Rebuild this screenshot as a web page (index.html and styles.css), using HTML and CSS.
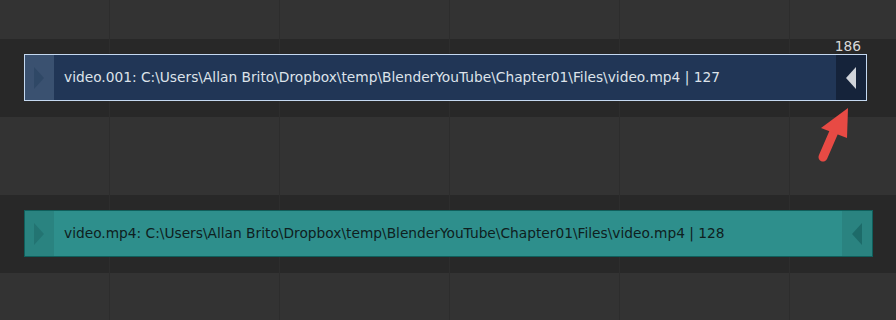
FILE: index.html
```html
<!DOCTYPE html>
<html lang="en">
<head>
    <meta charset="UTF-8">
    <title>Sequencer strips</title>
    <link rel="stylesheet" href="styles.css">
</head>
<body>
    <div class="timeline">
        <div class="band light top"></div>

        <!-- Channel 2 -->
        <div class="band dark">
            <div class="strip selected">
                <span class="frame-label">186</span>
                <div class="handle left"><span class="tri right-tri"></span></div>
                <div class="strip-name">video.001: C:\Users\Allan Brito\Dropbox\temp\BlenderYouTube\Chapter01\Files\video.mp4 | 127</div>
                <div class="handle right"><span class="tri left-tri"></span></div>
            </div>
        </div>

        <div class="band light"></div>

        <!-- Channel 1 -->
        <div class="band dark">
            <div class="strip movie">
                <div class="handle left"><span class="tri right-tri"></span></div>
                <div class="strip-name">video.mp4: C:\Users\Allan Brito\Dropbox\temp\BlenderYouTube\Chapter01\Files\video.mp4 | 128</div>
                <div class="handle right"><span class="tri left-tri"></span></div>
            </div>
        </div>

        <div class="band light bottom"></div>

        <!-- annotation arrow -->
        <svg class="pointer" width="60" height="70" viewBox="0 0 60 70">
            <line x1="9" y1="57" x2="22" y2="27" stroke="#e84a44" stroke-width="9" stroke-linecap="round"/>
            <polygon points="34,8 7,28 33,38" fill="#e84a44"/>
        </svg>
    </div>
</body>
</html>
```

FILE: styles.css
```css
/* Video sequencer timeline */
body {
    margin: 0;
    padding: 0;
    background: #333333;
    font-family: "DejaVu Sans", "Liberation Sans", sans-serif;
}

.timeline {
    position: relative;
    width: 896px;
    height: 320px;
    overflow: hidden;
    display: flex;
    flex-direction: column;
}

/* Channel bands with frame grid lines */
.band {
    background-image: linear-gradient(to right, transparent 109px, #2d2d2d 109px, #2d2d2d 110px, transparent 110px);
    background-size: 170px 100%;
    box-sizing: border-box;
}

.band.light {
    background-color: #333333;
    height: 78px;
}

.band.top {
    height: 39px;
}

.band.bottom {
    flex: 1;
}

.band.dark {
    background-color: #282828;
    height: 78px;
    padding: 15px 0 0 24px;
}

/* Strips */
.strip {
    position: relative;
    display: flex;
    align-items: stretch;
    height: 47px;
    box-sizing: border-box;
    border: 1px solid;
}

.strip.selected {
    width: 843px;
    background: #213656;
    border-color: #c5d9f1;
    color: #dde3ea;
}

.strip.movie {
    width: 849px;
    background: #2e8f8c;
    border-color: #0f5f5c;
    color: #0e2020;
}

.strip-name {
    flex: 1;
    padding-left: 10px;
    font-size: 13.75px;
    line-height: 45px;
    white-space: nowrap;
    overflow: hidden;
}

.handle {
    width: 29px;
    display: flex;
    align-items: center;
}

.selected .handle.left {
    background: #3a5170;
}

.selected .handle.right {
    width: 30px;
    background: #15233a;
}

.movie .handle.left {
    background: #2a8380;
}

.movie .handle.right {
    width: 30px;
    background: #2a8380;
}

.tri {
    width: 0;
    height: 0;
    border-top: 11px solid transparent;
    border-bottom: 11px solid transparent;
}

.right-tri {
    margin-left: 9px;
    border-left: 10px solid #2f4866;
}

.movie .right-tri {
    border-left-color: #237472;
}

.left-tri {
    margin-left: 10px;
    border-right: 10px solid #d0d4da;
}

.movie .left-tri {
    border-right-color: #1d6b69;
}

/* current frame number above the handle */
.frame-label {
    position: absolute;
    right: 5px;
    top: -17px;
    font-size: 13.75px;
    color: #d8d8d8;
}

.pointer {
    position: absolute;
    left: 814px;
    top: 100px;
}
```
